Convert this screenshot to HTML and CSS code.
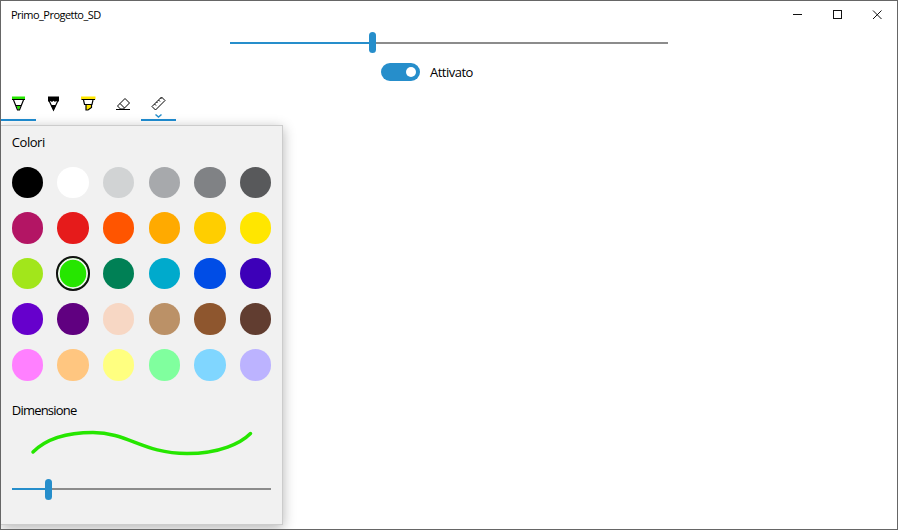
FILE: index.html
```html
<!DOCTYPE html>
<html lang="it">
<head>
<meta charset="utf-8">
<title>Primo_Progetto_SD</title>
<link rel="stylesheet" href="styles.css">
</head>
<body>
<div class="window">
  <header class="titlebar">
    <span class="title">Primo_Progetto_SD</span>
    <div class="controls">
      <svg viewBox="0 0 40 28"><path d="M16 13.5h9"/></svg>
      <svg viewBox="0 0 40 28"><rect x="16.5" y="9.5" width="8" height="8"/></svg>
      <svg viewBox="0 0 40 28"><path d="M16 9.500l8.500 8.500M24.500 9.500l-8.500 8.500"/></svg>
    </div>
  </header>
  <div class="slider main-slider"><i class="filled"></i><i class="thumb"></i><i class="rest"></i></div>
  <div class="toggle-row"><span class="toggle"><i></i></span><span class="toggle-label">Attivato</span></div>
  <nav class="toolbar">
    <button class="tool active"><svg viewBox="0 0 35 34">
      <path fill="#26e600" d="M11 9.500h13v3H11z"/><path fill="#26e600" d="M15.500 18.500h4l-1.500 4.500h-1z"/>
      <path d="M11 12.500h13M12.500 13l4 10h2l4-10M15 18.500h5"/></svg></button>
    <button class="tool"><svg viewBox="0 0 35 34">
      <path fill="#000" d="M12 9.500h11v4.500l-1.500 1-1.500-1-1 1-1.500-1.300L16 15l-1.500-1-1.500 1-1-1zM15 18.500h5l-2.500 5z"/>
      <path d="M12.500 12.500l5 10.500 5-10.500M15 18.500h5"/></svg></button>
    <button class="tool"><svg viewBox="0 0 35 34">
      <path fill="#ffe600" d="M10 9.500h14.500v3H10zM15 18h5v3l-3 2h-2z"/>
      <path d="M10.500 12.500h13.500M12.500 13l1 4.500h7.500l1-4.500M15 18v5h2l3.500-2.500v-2.500"/></svg></button>
    <button class="tool"><svg class="thin" viewBox="0 0 35 34">
      <path d="M11.500 19l7.500-7.500 4.500 4.500-6 6h-3zM14 16.500l4.500 4.500M10 22.500h14"/></svg></button>
    <button class="tool active"><svg class="thin" viewBox="0 0 35 34">
      <path d="M11 19.500L20.500 10l3.500 3.500-9.500 9.500zM13.500 17l1.500 1.500M15.500 15l1 1M17.500 13l1.500 1.500M19.500 11l1 1"/>
      <path class="chevron" d="M14.500 27.500l3 2.500 3-2.500"/></svg></button>
  </nav>
  <section class="panel">
    <h2>Colori</h2>
    <div class="swatches">
      <i style="background:#000"></i><i style="background:#fff"></i><i style="background:#d1d3d4"></i><i style="background:#a7a9ac"></i><i style="background:#808285"></i><i style="background:#58595b"></i>
      <i style="background:#b31564"></i><i style="background:#e61b1b"></i><i style="background:#ff5500"></i><i style="background:#ffaa00"></i><i style="background:#ffce00"></i><i style="background:#ffe600"></i>
      <i style="background:#a2e61b"></i><i class="selected" style="background:#26e600"></i><i style="background:#008055"></i><i style="background:#00aacc"></i><i style="background:#004de6"></i><i style="background:#3d00b8"></i>
      <i style="background:#6600cc"></i><i style="background:#600080"></i><i style="background:#f7d7c4"></i><i style="background:#bb9167"></i><i style="background:#8e562e"></i><i style="background:#613d30"></i>
      <i style="background:#ff80ff"></i><i style="background:#ffc680"></i><i style="background:#ffff80"></i><i style="background:#80ff9e"></i><i style="background:#80d6ff"></i><i style="background:#bcb3ff"></i>
    </div>
    <h2 class="size-title">Dimensione</h2>
    <svg class="stroke" viewBox="12 424 260 36"><path d="M33 452C43 442 62 432.500 93 432.500C128 432.500 143 453.500 187 453.500C220 453.500 241 443 250.500 433.500"/></svg>
    <div class="slider size-slider"><i class="filled"></i><i class="thumb"></i><i class="rest"></i></div>
  </section>
</div>
</body>
</html>
```
FILE: styles.css
```css
* { box-sizing: border-box; }
body { margin: 0; font-family: "Open Sans", "Noto Sans", sans-serif; color: #000; }
.window { width: 898px; height: 530px; border: 1px solid #666; background: #fff; overflow: hidden; }
.titlebar { height: 31px; display: flex; justify-content: space-between; }
.title { padding-left: 10px; font-size: 11px; line-height: 28px; letter-spacing: -0.53px; }
.controls { display: flex; }
.controls svg { width: 40px; height: 28px; fill: none; stroke: #111; stroke-width: 1; }
.slider { display: flex; align-items: center; height: 21px; }
.slider i { display: block; }
.filled { height: 2px; background: #268ecb; }
.thumb { width: 7px; height: 21px; border-radius: 3.5px; background: #268ecb; }
.rest { height: 2px; flex: 1; background: #8c8c8c; }
.main-slider { width: 438px; margin-left: 229px; }
.main-slider .filled { width: 138.5px; }
.toggle-row { display: flex; align-items: center; height: 18px; margin: 10px 0 0 380px; }
.toggle { width: 39px; height: 18px; border-radius: 9px; background: #268ecb; display: flex; align-items: center; justify-content: flex-end; padding-right: 4px; }
.toggle i { width: 10px; height: 10px; border-radius: 50%; background: #fff; }
.toggle-label { margin-left: 10px; font-size: 13px; line-height: 18px; letter-spacing: -0.5px; }
.toolbar { display: flex; height: 34px; margin-top: 6px; }
.tool { width: 35px; height: 34px; padding: 0; border: 0; background: none; }
.tool.active { border-bottom: 2px solid #1e88cb; }
.tool svg { display: block; width: 35px; height: 34px; fill: none; stroke: #000; stroke-width: 1.2; }
.tool svg.thin { stroke-width: 1; }
.tool path[fill] { stroke: none; }
.tool .chevron { stroke: #268ecb; stroke-width: 1.5; }
.panel { width: 281.5px; height: 400px; margin-top: 3.5px; padding: 0 10.8px; background: #f1f1f1; border: solid #ccc; border-width: 1px 1px 1px 0; box-shadow: 0 3px 12px rgba(0,0,0,.3); }
h2 { margin: 0; padding-top: 7px; font-size: 13px; line-height: 18px; font-weight: 400; letter-spacing: -0.45px; }
.swatches { display: grid; grid-template-columns: repeat(6, 31.5px); grid-auto-rows: 31.5px; gap: 14.1px; margin-top: 16.200px; }
.swatches i { border-radius: 50%; }
.swatches .selected { border: 2px solid #111; margin: -1.500px; box-shadow: inset 0 0 0 1.800px #f1f1f1; }
.size-title { padding-top: 20px; letter-spacing: -0.8px; }
.stroke { display: block; width: 260px; height: 36px; margin-top: 5.500px; fill: none; stroke: #26e600; stroke-width: 3.500; stroke-linecap: round; }
.size-slider { width: 259px; margin-top: 18.500px; }
.size-slider .filled { width: 33px; }
```
